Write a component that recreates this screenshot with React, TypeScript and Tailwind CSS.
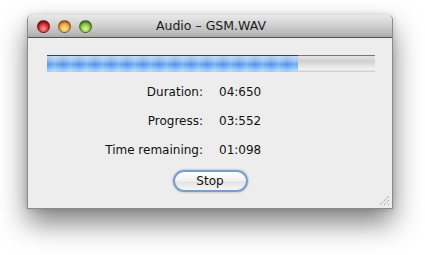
import React from 'react';

const rows: [string, string][] = [
  ['Duration:', '04:650'],
  ['Progress:', '03:552'],
  ['Time remaining:', '01:098'],
];

const Light: React.FC<{ cls: string }> = ({ cls }) => (
  <div className={`w-[13px] h-[13px] rounded-full border border-black/40 shadow-[inset_0_1px_2px_rgba(0,0,0,0.4)] ${cls}`} />
);

const App: React.FC = () => {
  return (
    <div className="w-[425px] h-[255px] bg-white pl-[27px] pt-[15px] font-['DejaVu_Sans',Verdana,sans-serif] text-[12px] text-[#111]">
      <div className="w-[366px] h-[194px] flex flex-col bg-[#ededed] rounded-t-[5px] border border-[#8a8a8a] border-t-0 shadow-[0_14px_28px_rgba(0,0,0,0.5),0_0_6px_rgba(0,0,0,0.15)] relative">
        {/* title bar */}
        <div className="h-[23px] flex items-center rounded-t-[5px] border-b border-[#515151] bg-[linear-gradient(to_bottom,#e9e9e9,#d4d4d4_40%,#b9b9b9_85%,#a9a9a9)] pl-[9px]">
          <div className="flex gap-[8px]">
            <Light cls="bg-[radial-gradient(circle_at_50%_70%,#f79a9a,#d2262a_55%,#8c0f12)]" />
            <Light cls="bg-[radial-gradient(circle_at_50%_70%,#fde7a0,#f0a33a_55%,#b66c12)]" />
            <Light cls="bg-[radial-gradient(circle_at_50%_70%,#dff5a8,#7fc03a_55%,#3f7d14)]" />
          </div>
          <div className="flex-1 text-center pr-[62px] text-[12.5px] text-[#1a1a1a]">Audio – GSM.WAV</div>
        </div>

        {/* progress bar */}
        <div className="mt-[17px] ml-[19px] w-[328px] h-[17px] flex">
          <div className="w-[251px] h-full border-t border-[#2b3c86] relative bg-[linear-gradient(to_bottom,#b9d3f4,#7fb1ee_35%,#4f90e6_50%,#78b6f6_75%,#a9d6ff_95%,#7aaee8)]">
            <div className="absolute inset-0 bg-[repeating-linear-gradient(to_right,rgba(255,255,255,0)_0px,rgba(255,255,255,0.25)_8px,rgba(255,255,255,0)_16px)]" />
          </div>
          <div className="flex-1 h-full border-t border-[#777] bg-[linear-gradient(to_bottom,#e4e4e4,#d0d0d0_35%,#e0e0e0_55%,#f2f2f2_85%,#c9c9c9)]" />
        </div>

        {/* info rows */}
        <div className="mt-[5px] flex flex-col">
          {rows.map(([k, v]) => (
            <div key={k} className="h-[29px] flex items-center">
              <div className="w-[175px] text-right">{k}</div>
              <div className="ml-[16px]">{v}</div>
            </div>
          ))}
        </div>

        {/* stop button */}
        <div className="mt-[6px] flex justify-center">
          <button className="w-[75px] h-[22px] rounded-full border-2 border-[#7c9cc9] bg-[linear-gradient(to_bottom,#ffffff,#f1f1f1_50%,#e2e2e2_55%,#f6f6f6)] shadow-[0_0_2px_rgba(60,90,150,0.6)] text-[12px] leading-none">
            Stop
          </button>
        </div>

        {/* resize grip */}
        <svg className="absolute right-[2px] bottom-[2px]" width="12" height="12" viewBox="0 0 12 12">
          <path d="M11 2 L2 11 M11 6 L6 11 M11 10 L10 11" stroke="#888" strokeWidth="1" strokeDasharray="1 1" />
        </svg>
      </div>
    </div>
  );
};

export default App;
